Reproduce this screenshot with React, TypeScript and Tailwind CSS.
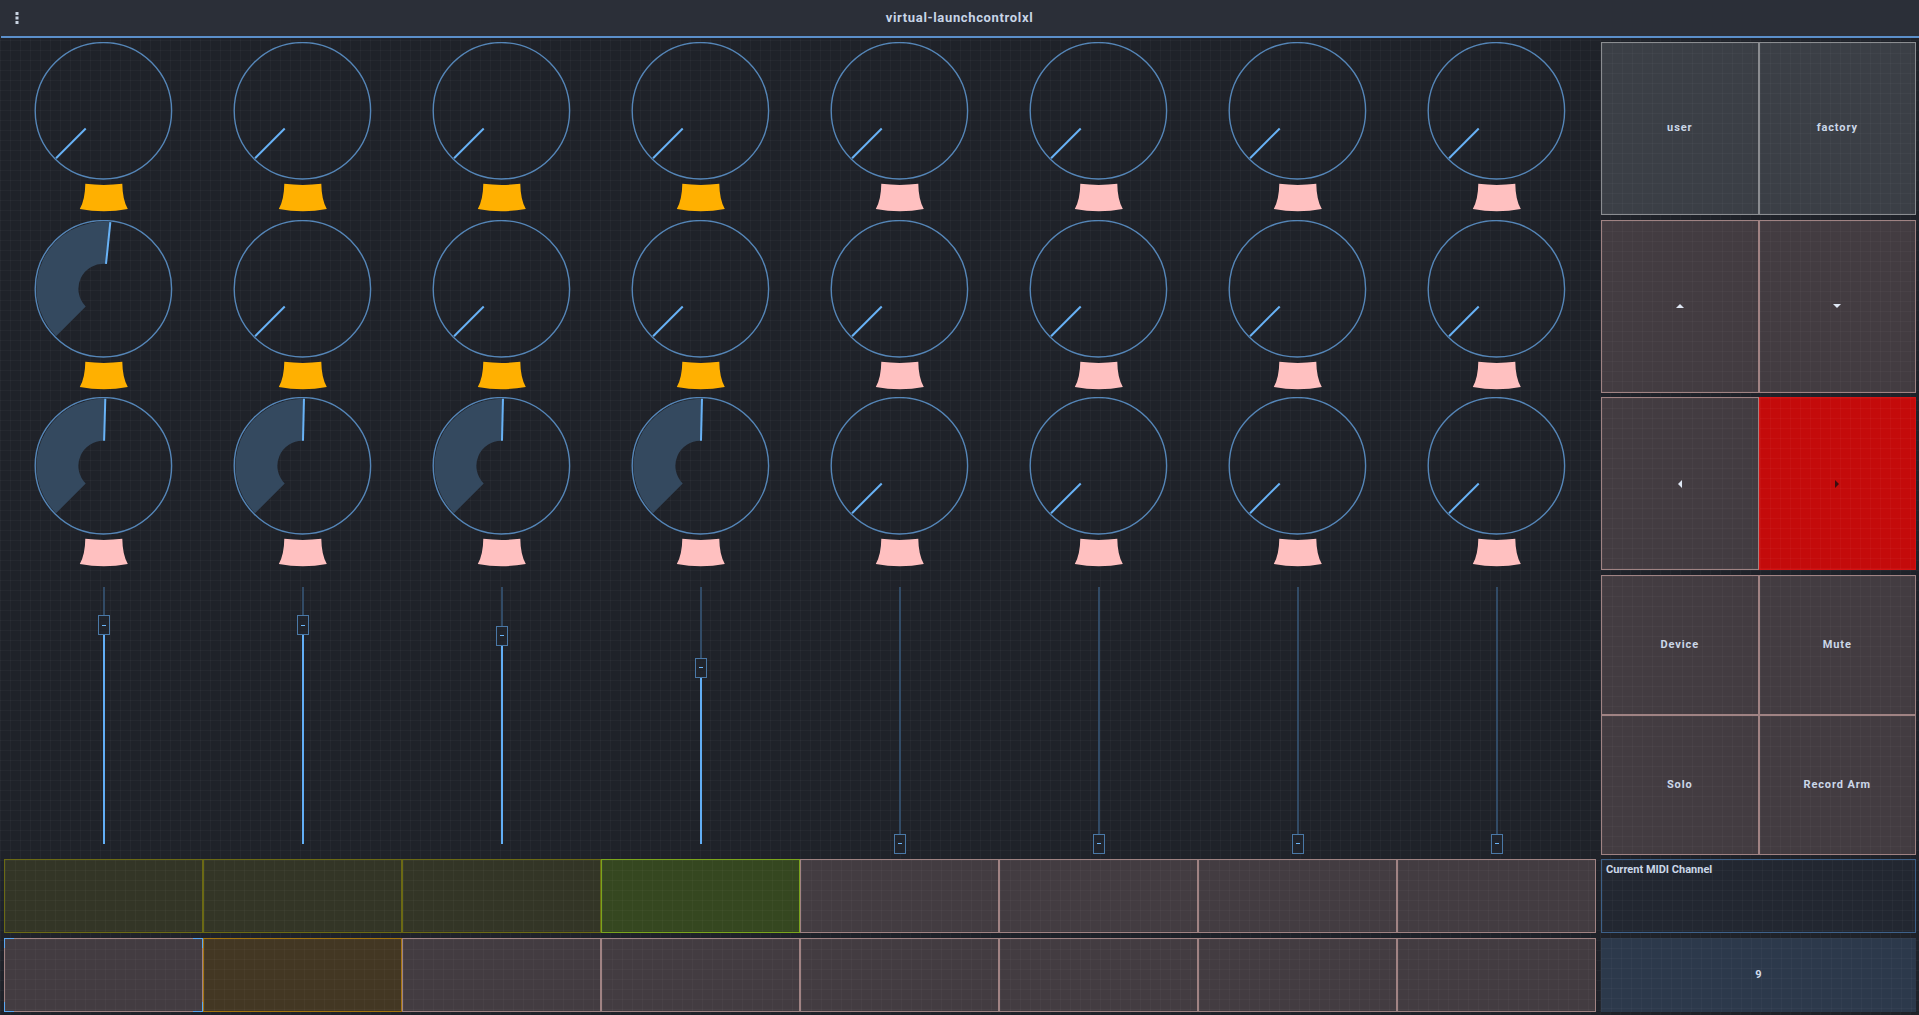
import React from "react";

const GRID =
  "bg-[linear-gradient(to_right,rgba(255,255,255,0.028)_1px,transparent_1px),linear-gradient(to_bottom,rgba(255,255,255,0.028)_1px,transparent_1px)] bg-size-[10px_10px]";

const AMBER = "#ffb000";
const PINK = "#ffc0c0";

// knob values per row (0..1) and led colour
const knobRows = [
  { values: [0, 0, 0, 0, 0, 0, 0, 0], leds: [AMBER, AMBER, AMBER, AMBER, PINK, PINK, PINK, PINK] },
  { values: [0.522, 0, 0, 0, 0, 0, 0, 0], leds: [AMBER, AMBER, AMBER, AMBER, PINK, PINK, PINK, PINK] },
  { values: [0.506, 0.505, 0.505, 0.505, 0, 0, 0, 0], leds: [PINK, PINK, PINK, PINK, PINK, PINK, PINK, PINK] },
];

const faders = [0.85, 0.85, 0.81, 0.685, 0, 0, 0, 0];

const padStyles = {
  olive: "bg-[#333526] border-[#6b6914]",
  green: "bg-[#354720] border-[#7ba51c]",
  rose: "bg-[#433c41] border-[#a08383]",
  amber: "bg-[#433723] border-[#a6750f]",
};

type PadKind = keyof typeof padStyles;

const padRow1: PadKind[] = ["olive", "olive", "olive", "green", "rose", "rose", "rose", "rose"];
const padRow2: PadKind[] = ["rose", "amber", "rose", "rose", "rose", "rose", "rose", "rose"];

function polar(cx: number, cy: number, r: number, deg: number) {
  const a = (deg * Math.PI) / 180;
  return [cx + r * Math.sin(a), cy - r * Math.cos(a)];
}

function Knob({ value, led }: { value: number; led: string }) {
  const cx = 99.4;
  const cy = 68.8;
  const r0 = 25;
  const r1 = 67;
  const a0 = -135;
  const a = -135 + value * 270;
  const large = a - a0 > 180 ? 1 : 0;
  const [ox0, oy0] = polar(cx, cy, r1, a0);
  const [ox1, oy1] = polar(cx, cy, r1, a);
  const [ix0, iy0] = polar(cx, cy, r0, a0);
  const [ix1, iy1] = polar(cx, cy, r0, a);
  const arc = `M${ox0} ${oy0} A${r1} ${r1} 0 ${large} 1 ${ox1} ${oy1} L${ix1} ${iy1} A${r0} ${r0} 0 ${large} 0 ${ix0} ${iy0} Z`;

  return (
    <div className="h-full w-full">
      <svg width="199" height="173" viewBox="0 0 199 173">
        {value > 0 && <path d={arc} fill="#34495f" />}
        <circle cx={cx} cy={cy} r="68.2" fill="none" stroke="#5586b8" strokeWidth="1.4" />
        <line x1={ix1} y1={iy1} x2={ox1} y2={oy1} stroke="#68b2f6" strokeWidth="2" />
        <g transform="translate(75.3 141.8)">
          <path
            d="M6 0 Q24.5 2.2 43 0 Q43.2 16 48.5 25.2 Q24.5 29.6 0.5 25.2 Q5.8 16 6 0 Z"
            fill={led}
          />
        </g>
      </svg>
    </div>
  );
}

function Fader({ value }: { value: number }) {
  const len = 257;
  const top = Math.max(0, (1 - value) * len - 10);
  const bottom = Math.max(0, value * len - 10);
  return (
    <div className="flex h-full w-full flex-col items-center pt-[12px]">
      <div className="flex w-[12px] flex-col items-center">
        <div className="w-[2px] bg-[#324b66]" style={{ height: top }} />
        <div className="flex h-[20px] w-[12px] items-center justify-center border border-[#4a78a6] bg-[#20242c]">
          <div className="h-px w-[4px] bg-[#6ab4f7]" />
        </div>
        <div className="w-[2px] bg-[#62aef5]" style={{ height: bottom }} />
      </div>
    </div>
  );
}

function Pad({ kind, focus }: { kind: PadKind; focus?: boolean }) {
  return (
    <div className={`relative h-full border ${padStyles[kind]} ${GRID}`}>
      {focus && (
        <>
          <span className="absolute -left-px -top-px h-[10px] w-[10px] border-l border-t border-[#5aa7f2]" />
          <span className="absolute -right-px -top-px h-[10px] w-[10px] border-r border-t border-[#5aa7f2]" />
          <span className="absolute -bottom-px -left-px h-[10px] w-[10px] border-b border-l border-[#5aa7f2]" />
          <span className="absolute -bottom-px -right-px h-[10px] w-[10px] border-b border-r border-[#5aa7f2]" />
        </>
      )}
    </div>
  );
}

function Btn({
  children,
  tone = "rose",
}: {
  children?: React.ReactNode;
  tone?: "gray" | "rose" | "red";
}) {
  const tones = {
    gray: "bg-[#3b3f46] border-[#8b8d91]",
    rose: "bg-[#433c41] border-[#a08383]",
    red: "bg-[#c40b0b] border-[#d81212]",
  };
  return (
    <div
      className={`flex h-full items-center justify-center border text-[11px] font-bold tracking-[0.08em] text-[#cbd7e8] ${tones[tone]} ${GRID}`}
    >
      {children}
    </div>
  );
}

function Caret({ dir, color = "#dfe8f5" }: { dir: "up" | "down" | "left" | "right"; color?: string }) {
  const paths = {
    up: "M0 4 L4 0 L8 4 Z",
    down: "M0 0 L8 0 L4 4 Z",
    left: "M4 0 L4 8 L0 4 Z",
    right: "M0 0 L4 4 L0 8 Z",
  };
  const vertical = dir === "up" || dir === "down";
  return (
    <svg width={vertical ? 8 : 4} height={vertical ? 4 : 8} viewBox={vertical ? "0 0 8 4" : "0 0 4 8"}>
      <path d={paths[dir]} fill={color} />
    </svg>
  );
}

export default function App() {
  return (
    <div className={`min-h-screen w-full bg-[#1f2229] ${GRID} font-['Roboto',sans-serif] text-[#cbd7e8]`}>
      <header className="grid h-[36px] grid-cols-[40px_1fr_40px] items-center bg-[#2b2f38]">
        <div className="flex justify-center">
          <svg width="4" height="12" viewBox="0 0 4 12" className="ml-[-6px]">
            <rect x="0.5" y="0" width="3" height="3" fill="#c9d4e2" />
            <rect x="0.5" y="4.5" width="3" height="3" fill="#c9d4e2" />
            <rect x="0.5" y="9" width="3" height="3" fill="#c9d4e2" />
          </svg>
        </div>
        <div className="text-center text-[13px] font-bold tracking-[0.05em] text-[#c8d5e7]">
          virtual-launchcontrolxl
        </div>
        <div />
      </header>
      <div className="ml-px h-[2px] bg-[#5b8fca]" />

      <main className="grid grid-cols-[1592px_315px] grid-rows-[173px_173px_173px_280px_74px_74px] gap-x-[5px] gap-y-[4.6px] pl-[4px] pt-[4px]">
        {/* knob row 1 */}
        <div className="grid grid-cols-8">
          {knobRows[0].values.map((v, i) => (
            <Knob key={i} value={v} led={knobRows[0].leds[i]} />
          ))}
        </div>
        <div className="grid grid-cols-2">
          <Btn tone="gray">user</Btn>
          <Btn tone="gray">factory</Btn>
        </div>

        {/* knob row 2 */}
        <div className="grid grid-cols-8">
          {knobRows[1].values.map((v, i) => (
            <Knob key={i} value={v} led={knobRows[1].leds[i]} />
          ))}
        </div>
        <div className="grid grid-cols-2">
          <Btn>
            <Caret dir="up" />
          </Btn>
          <Btn>
            <Caret dir="down" />
          </Btn>
        </div>

        {/* knob row 3 */}
        <div className="grid grid-cols-8">
          {knobRows[2].values.map((v, i) => (
            <Knob key={i} value={v} led={knobRows[2].leds[i]} />
          ))}
        </div>
        <div className="grid grid-cols-2">
          <Btn>
            <Caret dir="left" />
          </Btn>
          <Btn tone="red">
            <Caret dir="right" color="#3b0e10" />
          </Btn>
        </div>

        {/* faders */}
        <div className="grid grid-cols-8">
          {faders.map((v, i) => (
            <Fader key={i} value={v} />
          ))}
        </div>
        <div className="grid grid-cols-2 grid-rows-2">
          <Btn>Device</Btn>
          <Btn>Mute</Btn>
          <Btn>Solo</Btn>
          <Btn>Record Arm</Btn>
        </div>

        {/* pads */}
        <div className="grid grid-cols-8">
          {padRow1.map((k, i) => (
            <Pad key={i} kind={k} />
          ))}
        </div>
        <div className={`border border-[#3e6189] bg-[#222731] px-[4px] pt-[2px] ${GRID}`}>
          <div className="text-[11px] font-bold text-[#cbd7e8]">Current MIDI Channel</div>
        </div>

        <div className="grid grid-cols-8">
          {padRow2.map((k, i) => (
            <Pad key={i} kind={k} focus={i === 0} />
          ))}
        </div>
        <div className={`flex items-center justify-center bg-[#2c394b] text-[11px] font-bold text-[#d2ddec] ${GRID}`}>
          9
        </div>
      </main>
    </div>
  );
}
